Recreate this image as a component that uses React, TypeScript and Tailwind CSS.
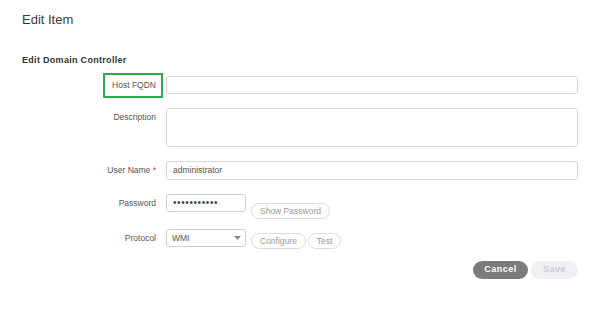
import React from "react";

const font = { fontFamily: '"Liberation Sans", Arial, sans-serif' };

function Label({ children, className = "" }: { children: React.ReactNode; className?: string }) {
  return (
    <div className={`w-[134px] shrink-0 text-right text-[8.5px] leading-[11px] text-[#555] ${className}`}>
      {children}
    </div>
  );
}

function Pill({ children }: { children: React.ReactNode }) {
  return (
    <div className="flex h-[16px] items-center rounded-full border border-[#dcdcdc] bg-white px-[8px] text-[8.5px] text-[#9a9a9a]">
      {children}
    </div>
  );
}

export default function App() {
  return (
    <div className="h-[316px] w-[600px] overflow-hidden bg-white pl-[22px] pr-[22px]" style={font}>
      <div className="pt-[12px] text-[13px] leading-[16px] text-[#3a3a3a]">Edit Item</div>
      <div className="mt-[26px] text-[9px] font-bold leading-[12px] tracking-[0.3px] text-[#333]">
        Edit Domain Controller
      </div>

      {/* Host FQDN */}
      <div className="mt-[10px] flex items-center">
        <Label className="relative">
          Host FQDN
          <div className="pointer-events-none absolute right-[-7px] top-[-7px] h-[25px] w-[60px] border-2 border-[#2bab4a]" />
        </Label>
        <div className="ml-[10px] h-[18px] flex-1 rounded-[3px] border border-[#d6d6d6] bg-white" />
      </div>

      {/* Description */}
      <div className="mt-[14px] flex items-start">
        <Label className="mt-[4px]">Description</Label>
        <div className="ml-[10px] h-[39px] flex-1 rounded-[3px] border border-[#d6d6d6] bg-white" />
      </div>

      {/* User Name */}
      <div className="mt-[14px] flex items-center">
        <Label>
          User Name <span className="text-[#e03030]">*</span>
        </Label>
        <div className="ml-[10px] flex h-[19px] flex-1 items-center rounded-[3px] border border-[#d6d6d6] bg-white pl-[6px] text-[8.5px] text-[#555]">
          administrator
        </div>
      </div>

      {/* Password */}
      <div className="mt-[14px] flex items-start">
        <Label className="mt-[4px]">Password</Label>
        <div className="ml-[10px] flex h-[18px] w-[80px] items-center rounded-[3px] border border-[#cfcfcf] bg-white pl-[6px] text-[10px] leading-none tracking-[0.6px] text-[#444]">
          •••••••••••
        </div>
        <div className="ml-[5px] mt-[9px]">
          <Pill>Show Password</Pill>
        </div>
      </div>

      {/* Protocol */}
      <div className="mt-[10px] flex items-start">
        <Label className="mt-[4px]">Protocol</Label>
        <div className="ml-[10px] flex h-[18px] w-[80px] items-center justify-between rounded-[3px] border border-[#cfcfcf] bg-white pl-[5px] pr-[4px] text-[8.5px] text-[#555]">
          <span>WMI</span>
          <svg width="7" height="4" viewBox="0 0 7 4">
            <path d="M0 0 L7 0 L3.5 4 Z" fill="#8a8a8a" />
          </svg>
        </div>
        <div className="ml-[5px] mt-[4px] flex gap-[2px]">
          <Pill>Configure</Pill>
          <Pill>Test</Pill>
        </div>
      </div>

      {/* Actions */}
      <div className="mt-[12px] flex justify-end gap-[3px]">
        <div className="flex h-[18px] w-[55px] items-center justify-center rounded-full bg-[#7b7b7b] text-[9px] font-bold tracking-[0.5px] text-white">
          Cancel
        </div>
        <div className="flex h-[18px] w-[47px] items-center justify-center rounded-full bg-[#eef0f5] text-[9px] font-bold tracking-[0.5px] text-[#c9cad2]">
          Save
        </div>
      </div>
    </div>
  );
}
